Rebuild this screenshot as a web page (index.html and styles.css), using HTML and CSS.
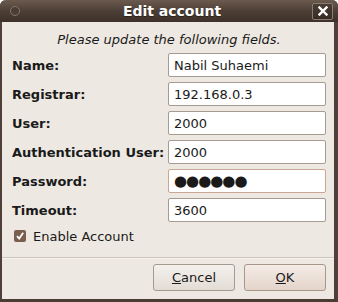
FILE: index.html
```html
<!DOCTYPE html>
<html lang="en">
<head>
  <meta charset="UTF-8" />
  <title>Edit account</title>
  <link rel="stylesheet" href="styles.css">
</head>
<body>
  <div class="window">
    <div class="titlebar">
      <span class="menu-dot"></span>
      <span class="title">Edit account</span>
      <button class="close" aria-label="Close">
        <svg viewBox="0 0 10 10" width="10" height="10">
          <path d="M1.5 1.5L8.5 8.5M8.5 1.5L1.5 8.5" stroke="#fff" stroke-width="2.4" stroke-linecap="square"/>
        </svg>
      </button>
    </div>

    <div class="content">
      <p class="subtitle">Please update the following fields.</p>

      <div class="form">
        <label>Name:</label>
        <input type="text" value="Nabil Suhaemi">
        <label>Registrar:</label>
        <input type="text" value="192.168.0.3">
        <label>User:</label>
        <input type="text" value="2000">
        <label>Authentication User:</label>
        <input type="text" value="2000">
        <label>Password:</label>
        <div class="input focus"><span class="dots">●●●●●●</span></div>
        <label>Timeout:</label>
        <input type="text" value="3600">
      </div>

      <div class="check">
        <span class="box">
          <svg viewBox="0 0 12 12" width="12" height="12">
            <path d="M3 6.2L5.2 8.6L9.2 2.8" fill="none" stroke="#fff" stroke-width="1.8"/>
          </svg>
        </span>
        Enable Account
      </div>
    </div>

    <div class="actions">
      <button class="btn"><u>C</u>ancel</button>
      <button class="btn default"><u>O</u>K</button>
    </div>
  </div>
</body>
</html>
```

FILE: styles.css
```css
body {
  margin: 0;
  background: #ffffff;
  font-family: 'DejaVu Sans', sans-serif;
  font-size: 13px;
  color: #1a1a1a;
}

.window {
  width: 338px;
  height: 302px;
  box-sizing: border-box;
  background: #ede8e1;
  border-left: 2px solid #4e4038;
  border-right: 4px solid #4e4038;
  border-bottom: 3px solid #4a3c33;
  border-radius: 6px 6px 0 0;
  display: flex;
  flex-direction: column;
}

.titlebar {
  height: 22px;
  margin: 0 -4px 0 -2px;
  border-radius: 6px 6px 0 0;
  background: linear-gradient(#6b5a4f, #4d3f36 50%, #3d3129);
  display: flex;
  align-items: center;
  padding: 0 5px 0 10px;
}

.menu-dot {
  width: 8px;
  height: 8px;
  border-radius: 50%;
  border: 1px solid #857669;
  background: #4a3d35;
}

.title {
  flex: 1;
  text-align: center;
  color: #ffffff;
  font-weight: bold;
  font-size: 14px;
  text-shadow: 0 1px 1px #2a211b;
  padding-left: 12px;
}

.close {
  width: 21px;
  height: 17px;
  padding: 0;
  border: 1px solid #8a7b70;
  border-radius: 2px;
  background: linear-gradient(#4b3d34, #372c25);
  display: flex;
  align-items: center;
  justify-content: center;
}

.content {
  padding: 9px 8px 0 10px;
}

.subtitle {
  margin: 0 0 4px;
  line-height: 18px;
  font-style: italic;
  text-align: center;
}

.form {
  display: grid;
  grid-template-columns: 156px 158px;
  grid-auto-rows: 24px;
  row-gap: 5px;
  align-items: center;
}

.form label {
  font-weight: bold;
  white-space: nowrap;
}

.form input,
.form .input {
  box-sizing: border-box;
  height: 24px;
  width: 158px;
  margin: 0;
  border: 1px solid #a59b90;
  border-radius: 2px;
  background: #ffffff;
  font-family: 'DejaVu Sans', sans-serif;
  font-size: 13px;
  color: #1a1a1a;
  padding: 0 5px;
}

.form .input.focus {
  border-color: #c9a893;
  display: flex;
  align-items: center;
}

.dots {
  font-size: 15px;
  letter-spacing: -1px;
}

.check {
  margin-top: 5px;
  height: 18px;
  display: flex;
  align-items: center;
  gap: 7px;
  padding-left: 2px;
}

.check .box {
  width: 12px;
  height: 12px;
  border-radius: 2px;
  background: #7c5e4f;
  display: flex;
}

.actions {
  margin-top: 12px;
  border-top: 1px solid #cbc3b9;
  box-shadow: inset 0 1px 0 #f7f4f0;
  padding: 6px 8px 0;
  display: flex;
  justify-content: flex-end;
  gap: 9px;
}

.btn {
  width: 82px;
  height: 27px;
  border: 1px solid #a39a90;
  border-radius: 3px;
  background: linear-gradient(#f4f1ed, #e2dcd4);
  font-family: 'DejaVu Sans', sans-serif;
  font-size: 13px;
  color: #1a1a1a;
  padding: 0;
}

.btn.default {
  background: linear-gradient(#f4ece6, #e4d4ca);
  border-color: #a8968a;
}
```
